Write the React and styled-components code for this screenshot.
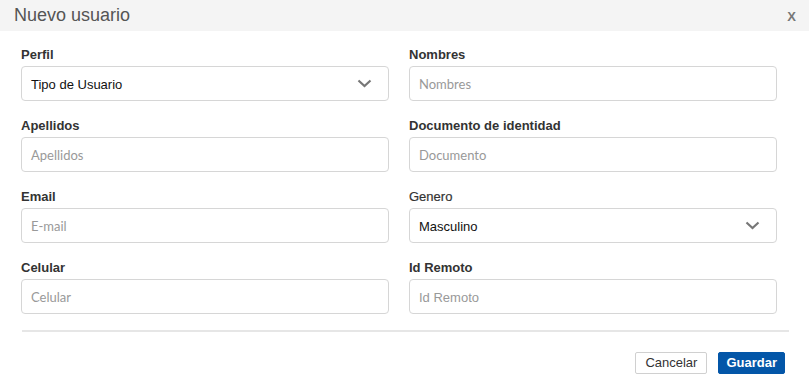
import React from "react";
import styled, { createGlobalStyle } from "styled-components";

const Global = createGlobalStyle`
  html, body { margin: 0; padding: 0; background: #fff; }
  body { font-family: "Liberation Sans", Arial, sans-serif; }
  * { box-sizing: border-box; }
`;

const Modal = styled.div`
  width: 809px;
  height: 389px;
  background: #fff;
  display: flex;
  flex-direction: column;
`;

const Header = styled.div`
  height: 31px;
  background: #f4f4f4;
  display: flex;
  align-items: center;
  justify-content: space-between;
  padding: 0 13px 0 14px;
`;

const Title = styled.h4`
  margin: 0;
  font-family: "Liberation Sans", Arial, sans-serif;
  font-weight: 400;
  font-size: 18px;
  color: #555;
  line-height: 20px;
  margin-top: -1px;
`;

const Close = styled.span`
  font-family: "Liberation Sans", Arial, sans-serif;
  font-weight: 700;
  font-size: 13px;
  color: #777;
  margin-top: 2px;
`;

const Body = styled.div`
  padding: 16px 20px 0 21px;
`;

const Grid = styled.div`
  width: 756px;
  display: grid;
  grid-template-columns: 368px 368px;
  column-gap: 20px;
  row-gap: 17px;
`;

const Field = styled.div`
  display: flex;
  flex-direction: column;
  gap: 3px;
`;

const Label = styled.label`
  font-family: "Liberation Sans", Arial, sans-serif;
  font-size: 13px;
  line-height: 16px;
  font-weight: ${(p) => (p.$light ? 500 : 700)};
  color: #333;
  -webkit-text-stroke: ${(p) => (p.$light ? "0.2px #333" : "0")};
`;

const Box = styled.div`
  height: 35px;
  border: 1px solid #d6d6d6;
  border-radius: 4px;
  display: flex;
  align-items: center;
  justify-content: space-between;
  padding: 0 16px 0 9px;
  background: #fff;
`;

const Placeholder = styled.span`
  font-family: ${(p) =>
    p.$arial ? '"Liberation Sans", Arial, sans-serif' : 'Lato, "Open Sans", sans-serif'};
  font-size: 13px;
  color: #999;
  margin-top: ${(p) => (p.$arial ? "1px" : "0")};
`;

const Value = styled.span`
  font-family: "Liberation Sans", Arial, sans-serif;
  font-size: 13px;
  color: #111;
  margin-top: 1px;
`;

const Chevron = () => (
  <svg width="15" height="9" viewBox="0 0 15 9">
    <path d="M1.5 1.5 L7.5 7 L13.5 1.5" fill="none" stroke="#777" strokeWidth="2.2" />
  </svg>
);

const Divider = styled.hr`
  margin: 16px 0 0 1px;
  border: 0;
  height: 2px;
  background: #e6e6e6;
`;

const Footer = styled.div`
  display: flex;
  justify-content: flex-end;
  gap: 11px;
  padding: 20px 4px 0 0;
`;

const Button = styled.button`
  height: 22px;
  padding: 0 ${(p) => (p.$primary ? "7px" : "9px")};
  font-family: "Liberation Sans", Arial, sans-serif;
  font-size: 13px;
  font-weight: ${(p) => (p.$primary ? 700 : 400)};
  color: ${(p) => (p.$primary ? "#fff" : "#333")};
  background: ${(p) => (p.$primary ? "#0356a8" : "#fff")};
  border: 1px solid ${(p) => (p.$primary ? "#0356a8" : "#d0d0d0")};
  border-radius: 2px;
  cursor: pointer;
  line-height: 20px;
`;

const fields = [
  { label: "Perfil", select: "Tipo de Usuario" },
  { label: "Nombres", placeholder: "Nombres" },
  { label: "Apellidos", placeholder: "Apellidos" },
  { label: "Documento de identidad", placeholder: "Documento" },
  { label: "Email", placeholder: "E-mail" },
  { label: "Genero", select: "Masculino", light: true },
  { label: "Celular", placeholder: "Celular" },
  { label: "Id Remoto", placeholder: "Id Remoto", arial: true },
];

export default function App() {
  return (
    <>
      <Global />
      <Modal>
        <Header>
          <Title>Nuevo usuario</Title>
          <Close>X</Close>
        </Header>
        <Body>
          <Grid>
            {fields.map((f) => (
              <Field key={f.label}>
                <Label $light={f.light}>{f.label}</Label>
                <Box>
                  {f.select ? (
                    <>
                      <Value>{f.select}</Value>
                      <Chevron />
                    </>
                  ) : (
                    <Placeholder $arial={f.arial}>{f.placeholder}</Placeholder>
                  )}
                </Box>
              </Field>
            ))}
          </Grid>
          <Divider />
          <Footer>
            <Button>Cancelar</Button>
            <Button $primary>Guardar</Button>
          </Footer>
        </Body>
      </Modal>
    </>
  );
}
